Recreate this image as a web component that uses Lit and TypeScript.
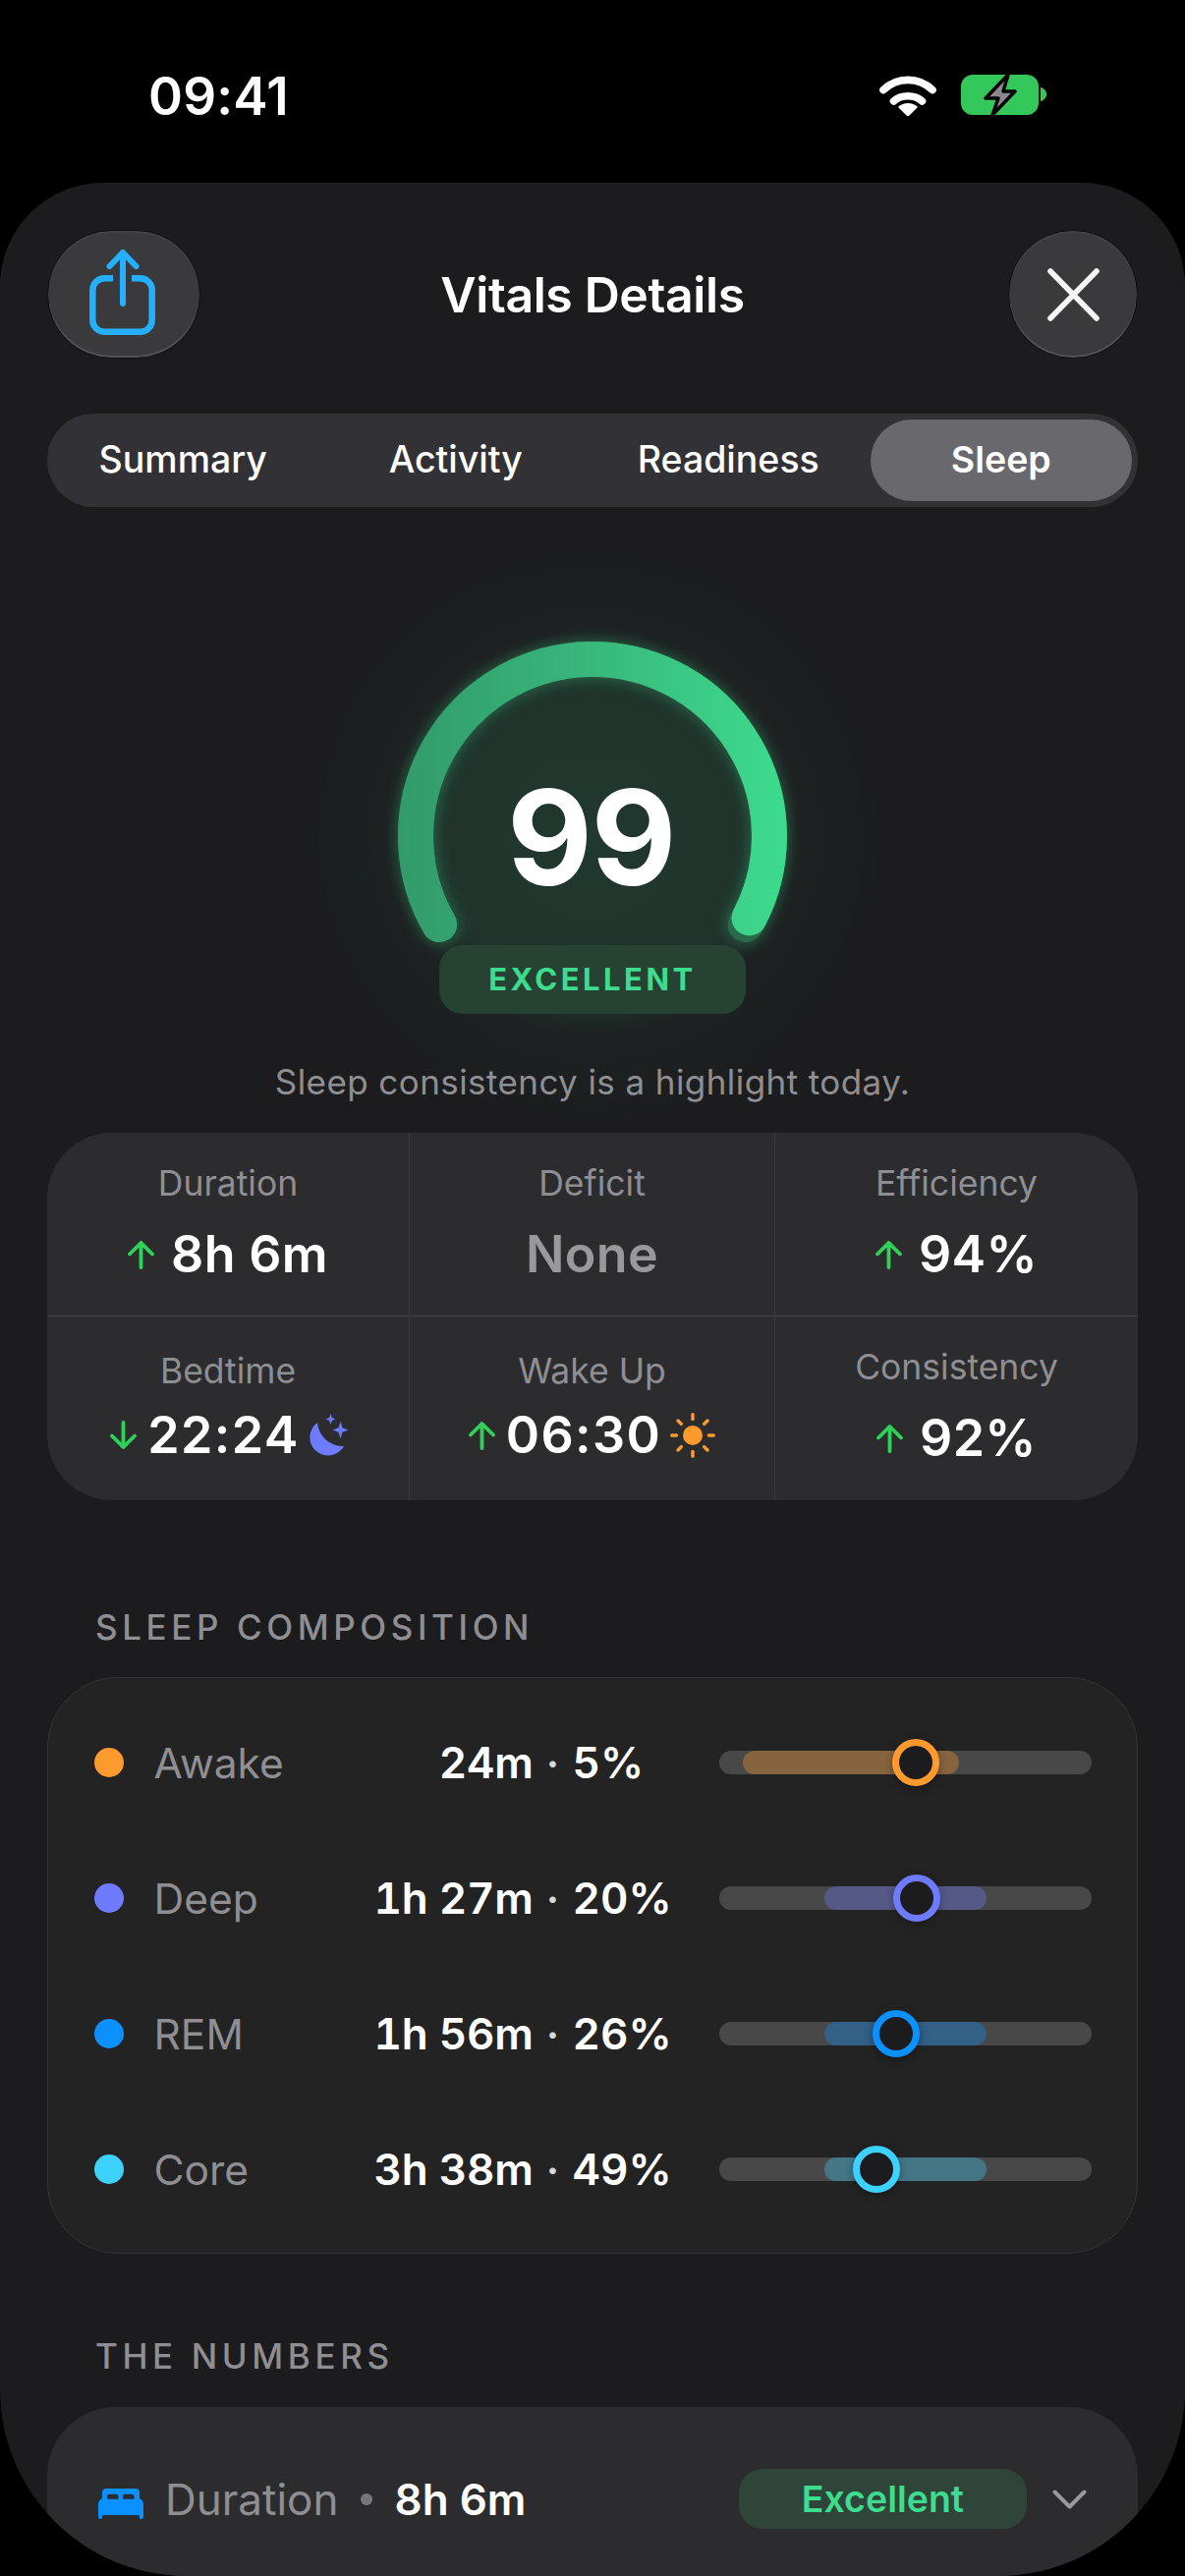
import { LitElement, html, css, svg } from "lit";
import { customElement } from "lit/decorators.js";

const up = html`<svg class="arrow" viewBox="0 0 27 30"><path d="M13.500 28V3M2 14.500 13.500 3 25 14.500" fill="none" stroke="#30d158" stroke-width="3.800" stroke-linecap="round" stroke-linejoin="round"/></svg>`;
const down = html`<svg class="arrow" viewBox="0 0 27 30"><path d="M13.500 2v25M2 15.500 13.500 27 25 15.500" fill="none" stroke="#30d158" stroke-width="3.800" stroke-linecap="round" stroke-linejoin="round"/></svg>`;
const moon = html`<svg class="moon" viewBox="0 0 42 44"><path fill="#6f7bff" d="M10 9A18.500 18.500 0 1 0 37 33 26 26 0 0 1 10 9Z"/><path fill="#6f7bff" d="M23.500 0l1.400 4.100 3.600 1.400-3.600 1.400-1.400 4.100-1.400-4.100-3.600-1.400 3.600-1.400ZM33.500 8l2 6.300 6 2.200-6 2.200-2 6.300-2-6.300-6-2.200 6-2.200Z"/></svg>`;
const sun = html`<svg class="sun" viewBox="0 0 46 46"><circle cx="23" cy="23" r="10" fill="#ff9a2e"/>${[0, 45, 90, 135, 180, 225, 270, 315].map(
  (a) => svg`<line x1="23" y1="6.500" x2="23" y2="1.800" transform="rotate(${a} 23 23)" stroke="#ff9a2e" stroke-width="3.400" stroke-linecap="round"/>`
)}</svg>`;

const stages = [
  { name: "Awake", time: "24m", pct: "5%", color: "#ff9a2e", from: 24 / 379, w: 220 / 379, at: 200 / 379 },
  { name: "Deep", time: "1h 27m", pct: "20%", color: "#6f7bff", from: 107 / 379, w: 165 / 379, at: 201 / 379 },
  { name: "REM", time: "1h 56m", pct: "26%", color: "#0a91ff", from: 107 / 379, w: 165 / 379, at: 180 / 379 },
  { name: "Core", time: "3h 38m", pct: "49%", color: "#3dd1ff", from: 107 / 379, w: 165 / 379, at: 160 / 379 },
];

@customElement("app-root")
export class AppRoot extends LitElement {
  static styles = css`
    :host {
      display: block;
      width: 1206px;
      height: 2622px;
      background: #000;
      overflow: hidden;
      font-family: Inter, "Liberation Sans", sans-serif;
      color: #fff;
    }
    .status {
      height: 186px;
      box-sizing: border-box;
      padding: 73px 141px 0 151px;
      display: flex;
      align-items: flex-start;
      justify-content: space-between;
    }
    .time {
      font-size: 53px;
      line-height: 50px;
      font-weight: 600;
      letter-spacing: 0.2px;
    }
    .status-icons {
      display: flex;
      gap: 25px;
      margin-top: 3px;
      align-items: flex-start;
    }
    .wifi { width: 58px; height: 41px; margin-top: 1px; display: block; }
    .battery { width: 87px; height: 41px; display: block; }
    .sheet {
      height: 2436px;
      background: #1c1c1e;
      border-radius: 105px 105px 190px 190px;
      overflow: hidden;
      box-sizing: border-box;
      padding: 48px 48px 0;
    }
    .head {
      display: flex;
      align-items: center;
      justify-content: space-between;
      height: 131px;
    }
    .btn {
      height: 131px;
      border-radius: 66px;
      box-sizing: border-box;
      background: #3a3a3c;
      border: 1.500px solid #0f0f10;
      box-shadow: inset 0 2px 1px rgba(255, 255, 255, 0.05), inset 0 -2px 1px rgba(255, 255, 255, 0.14);
      display: flex;
      align-items: center;
      justify-content: center;
    }
    .share { width: 156px; }
    .close { width: 132px; }
    .share svg { width: 76px; height: 96px; display: block; margin-left: -2px; }
    .close svg { width: 54px; height: 54px; display: block; }
    h1 {
      margin: 0 24px 0 0;
      font-size: 50px;
      line-height: 60px;
      font-weight: 600;
      letter-spacing: -0.4px;
    }
    .tabs {
      margin-top: 56px;
      height: 95px;
      border-radius: 48px;
      background: #323236;
      display: grid;
      grid-template-columns: repeat(4, 1fr);
    }
    .tab {
      display: flex;
      align-items: center;
      justify-content: center;
      font-size: 37.500px;
      font-weight: 500;
      margin: 6px 6px 6px 5px;
      padding-bottom: 2px;
      border-radius: 42px;
    }
    .tab.on {
      background: #68686d;
      font-weight: 600;
    }
    .hero {
      display: grid;
      justify-items: center;
      padding-top: 105px;
    }
    .gauge, .score, .badge { grid-area: 1 / 1; align-self: start; }
    .gauge { width: 520px; height: 458px; overflow: visible; display: block; }
    .score {
      margin-top: 164px;
      margin-right: 3px;
      font-size: 134px;
      line-height: 134px;
      font-weight: 700;
      letter-spacing: -1.500px;
    }
    .badge {
      margin-top: 341px;
      width: 312px;
      height: 70px;
      box-sizing: border-box;
      padding-bottom: 2px;
      border-radius: 24px;
      background: #254233;
      color: #3ddc8e;
      font-size: 31px;
      font-weight: 700;
      letter-spacing: 3.500px;
      display: flex;
      align-items: center;
      justify-content: center;
    }
    .caption {
      text-align: center;
      font-size: 35px;
      line-height: 44px;
      color: #8e8e93;
      letter-spacing: 0.42px;
    }
    .grid {
      margin-top: 30px;
      height: 374px;
      background: #2c2c2e;
      border-radius: 66px;
      display: grid;
      grid-template-columns: 369px 372px 369px;
      grid-template-rows: 187px 187px;
      overflow: hidden;
    }
    .cell {
      box-sizing: border-box;
      display: flex;
      flex-direction: column;
      align-items: center;
      padding-top: 32px;
      border-right: 1px solid #3a3a3c;
    }
    .cell:nth-child(3n) { border-right: 0; }
    .cell:nth-child(-n + 3) { border-bottom: 1.500px solid #434345; }
    .cell.bed { padding-top: 36px; }
    .lab {
      font-size: 35.500px;
      line-height: 40px;
      color: #8e8e93;
    }
    .val {
      margin-top: 22px;
      height: 60px;
      display: flex;
      align-items: center;
      gap: 17px;
      font-size: 52px;
      line-height: 60px;
      font-weight: 600;
      letter-spacing: 0.3px;
    }
    .val.none { color: #98989d; }
    .val.icons { margin-top: 15px; gap: 11px; letter-spacing: 1.400px; }
    .val.night { padding-left: 3px; }
    .arrow { width: 27px; height: 30px; display: block; flex: none; }
    .moon { width: 42px; height: 44px; display: block; flex: none; margin-left: -3px; }
    .sun { width: 46px; height: 46px; display: block; flex: none; margin-left: -2px; }
    .sect {
      margin: 0 0 0 49px;
      font-size: 35px;
      line-height: 40px;
      font-weight: 500;
      letter-spacing: 4.600px;
      color: #8e8e93;
    }
    .sect.a { margin-top: 109px; }
    .sect.b { margin-top: 84px; }
    .comp {
      margin-top: 31px;
      height: 587px;
      box-sizing: border-box;
      background: #232323;
      border: 1.500px solid #343436;
      border-radius: 72px;
      padding: 17px 46px 0 46.500px;
    }
    .row {
      height: 138px;
      display: grid;
      grid-template-columns: 62px 150px 235px 40px 100px 49px 379px;
      align-items: center;
    }
    .dot { width: 30px; height: 30px; border-radius: 50%; }
    .name { font-size: 42.500px; color: #8e8e93; margin-left: -1px; }
    .t, .p { font-size: 44px; font-weight: 600; white-space: nowrap; font-variant-numeric: tabular-nums; }
    .t { text-align: right; letter-spacing: -0.3px; }
    .s { text-align: center; font-size: 42px; font-weight: 600; color: #d8d8d8; }
    .track {
      grid-column: 7;
      position: relative;
      height: 24px;
      border-radius: 12px;
      background: #484848;
    }
    .fill {
      position: absolute;
      top: 0;
      bottom: 0;
      border-radius: 12px;
      opacity: 0.34;
    }
    .thumb {
      position: absolute;
      top: -12px;
      width: 48px;
      height: 48px;
      box-sizing: border-box;
      border-radius: 50%;
      border: 7.500px solid;
      background: #1c1c1e;
      box-shadow: 0 2px 8px rgba(0, 0, 0, 0.35);
    }
    .numbers {
      margin-top: 32px;
      height: 240px;
      background: #2c2c2e;
      border-radius: 70px;
      box-sizing: border-box;
      padding: 63px 52px 0 52px;
    }
    .nrow {
      height: 61px;
      display: flex;
      align-items: center;
    }
    .bedi { width: 46px; height: 31px; display: block; margin-top: 9px; flex: none; }
    .nlab { margin-left: 22px; font-size: 44px; color: #8e8e93; }
    .bul { margin: 0 22px 0 23px; width: 12px; height: 12px; border-radius: 50%; background: #77777b; }
    .nval { font-size: 44px; font-weight: 600; }
    .pill {
      margin-left: auto;
      width: 293px;
      height: 61px;
      border-radius: 24px;
      background: #2f4539;
      color: #3ddc8e;
      font-size: 37.500px;
      font-weight: 600;
      display: flex;
      align-items: center;
      justify-content: center;
    }
    .chev { width: 35px; height: 20px; margin: 0 0 0 26px; display: block; flex: none; }
  `;

  render() {
    return html`
      <div class="status">
        <div class="time">09:41</div>
        <div class="status-icons">
          <svg class="wifi" viewBox="0 0 58 41">
            <path d="M4 14.500C18 1 40 1 54 14.500M14.500 26C22 19 36 19 43.500 26" fill="none" stroke="#fff" stroke-width="7.600" stroke-linecap="round"/>
            <path d="M19 32C24 26.500 34 26.500 39 32L30.500 40.500Q29 41.500 27.500 40.500Z" fill="#fff"/>
          </svg>
          <svg class="battery" viewBox="0 0 87 41">
            <rect x="0" y="0" width="79" height="41" rx="12" fill="#34c759"/>
            <path d="M81 13c3 .5 6 3 6 7s-3 6.500-6 7Z" fill="#34c759"/>
            <path d="M48 0 25 24H38L32 41 55 17H43Z" fill="#8a8a8e" stroke="#000" stroke-width="3.500" stroke-linejoin="round"/>
          </svg>
        </div>
      </div>
      <div class="sheet">
        <div class="head">
          <div class="btn share">
            <svg viewBox="0 0 76 96">
              <path d="M28 31.300H19.300a12 12 0 0 0-12 12V73.700a12 12 0 0 0 12 12H55.700a12 12 0 0 0 12-12V43.300a12 12 0 0 0-12-12H47" fill="none" stroke="#24b0ff" stroke-width="6.500"/>
              <path d="M38 57V6M24.500 19 38 5 51.500 19" fill="none" stroke="#24b0ff" stroke-width="6" stroke-linecap="round" stroke-linejoin="round"/>
            </svg>
          </div>
          <h1>Vitals Details</h1>
          <div class="btn close">
            <svg viewBox="0 0 54 54"><path d="M4 3 51 51M51 3 4 51" fill="none" stroke="#f5f5f5" stroke-width="5.600" stroke-linecap="round"/></svg>
          </div>
        </div>
        <div class="tabs">
          <div class="tab">Summary</div>
          <div class="tab">Activity</div>
          <div class="tab">Readiness</div>
          <div class="tab on">Sleep</div>
        </div>
        <div class="hero">
          <svg class="gauge" viewBox="0 0 520 458">
            <defs>
              <radialGradient id="halo" cx="260" cy="230" r="300" gradientUnits="userSpaceOnUse">
                <stop offset="0" stop-color="#3ddc8e" stop-opacity="0.15"/>
                <stop offset="0.55" stop-color="#3ddc8e" stop-opacity="0.12"/>
                <stop offset="0.68" stop-color="#3ddc8e" stop-opacity="0.03"/>
                <stop offset="1" stop-color="#3ddc8e" stop-opacity="0"/>
              </radialGradient>
              <linearGradient id="arc" x1="60" y1="0" x2="460" y2="0" gradientUnits="userSpaceOnUse">
                <stop offset="0" stop-color="#329a69"/>
                <stop offset="0.5" stop-color="#39b87c"/>
                <stop offset="1" stop-color="#3ddc8e"/>
              </linearGradient>
              <filter id="blur" x="-20%" y="-20%" width="140%" height="140%"><feGaussianBlur stdDeviation="7"/></filter>
            </defs>
            <circle cx="260" cy="230" r="300" fill="url(#halo)"/>
            <path d="M104.100 320A180 180 0 1 1 415.900 320" fill="none" stroke="#3ddc8e" stroke-opacity="0.3" stroke-width="40" stroke-linecap="round" filter="url(#blur)"/>
            <path d="M104.100 320A180 180 0 1 1 415.900 320" fill="none" stroke="#2a6a4c" stroke-width="36" stroke-linecap="round"/>
            <path d="M104.100 320A180 180 0 1 1 419.500 313.400" fill="none" stroke="url(#arc)" stroke-width="36" stroke-linecap="round"/>
          </svg>
          <div class="score">99</div>
          <div class="badge">EXCELLENT</div>
        </div>
        <div class="caption">Sleep consistency is a highlight today.</div>
        <div class="grid">
          <div class="cell"><div class="lab">Duration</div><div class="val">${up}<span>8h 6m</span></div></div>
          <div class="cell"><div class="lab">Deficit</div><div class="val none">None</div></div>
          <div class="cell"><div class="lab">Efficiency</div><div class="val">${up}<span>94%</span></div></div>
          <div class="cell bed"><div class="lab">Bedtime</div><div class="val icons night">${down}<span>22:24</span>${moon}</div></div>
          <div class="cell bed"><div class="lab">Wake Up</div><div class="val icons">${up}<span>06:30</span>${sun}</div></div>
          <div class="cell"><div class="lab">Consistency</div><div class="val">${up}<span>92%</span></div></div>
        </div>
        <div class="sect a">SLEEP COMPOSITION</div>
        <div class="comp">
          ${stages.map(
            (s) => html`<div class="row">
              <div class="dot" style="background:${s.color}"></div>
              <div class="name">${s.name}</div>
              <div class="t">${s.time}</div>
              <div class="s">·</div>
              <div class="p">${s.pct}</div>
              <div class="track">
                <div class="fill" style="left:${s.from * 100}%;width:${s.w * 100}%;background:${s.color}"></div>
                <div class="thumb" style="left:calc(${s.at * 100}% - 24px);border-color:${s.color}"></div>
              </div>
            </div>`
          )}
        </div>
        <div class="sect b">THE NUMBERS</div>
        <div class="numbers">
          <div class="nrow">
            <svg class="bedi" viewBox="0 0 46 31">
              <path fill="#0a91ff" fill-rule="evenodd" d="M8 0H38Q42 0 42 4V10Q46 12 46 16V28.500L45 31H42.500L41.500 27H4.500L3.500 31H1L0 28.500V16Q0 12 4 10V4Q4 0 8 0ZM11 5.700Q9 5.700 9 7.700V10.700H20.500V7.700Q20.500 5.700 18.500 5.700ZM27 5.700Q25 5.700 25 7.700V10.700H36.500V7.700Q36.500 5.700 34.500 5.700Z"/>
            </svg>
            <div class="nlab">Duration</div>
            <div class="bul"></div>
            <div class="nval">8h 6m</div>
            <div class="pill">Excellent</div>
            <svg class="chev" viewBox="0 0 35 20"><path d="M2.500 2.500 17.500 17.500 32.500 2.500" fill="none" stroke="#98989d" stroke-width="4" stroke-linecap="round" stroke-linejoin="round"/></svg>
          </div>
        </div>
      </div>
    `;
  }
}
